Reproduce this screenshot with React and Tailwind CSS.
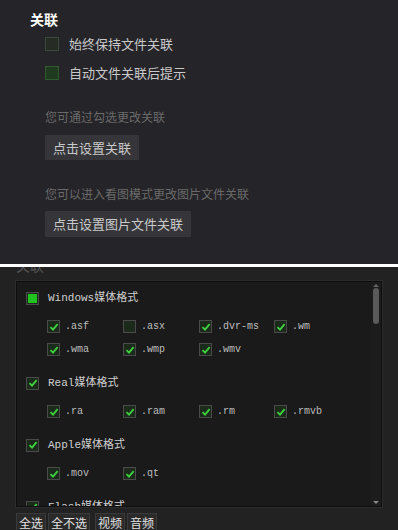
import { useState } from 'react';

const cn = '"Noto Sans CJK SC", "Noto Sans", sans-serif';
const mono = '"Liberation Mono", "Noto Sans CJK SC", monospace';

const grupos = [
  { nombre: 'Windows媒体格式', estado: 'parcial', items: [['.asf', true], ['.asx', false], ['.dvr-ms', true], ['.wm', true], ['.wma', true], ['.wmp', true], ['.wmv', true]] },
  { nombre: 'Real媒体格式', estado: 'todo', items: [['.ra', true], ['.ram', true], ['.rm', true], ['.rmvb', true]] },
  { nombre: 'Apple媒体格式', estado: 'todo', items: [['.mov', true], ['.qt', true]] },
  { nombre: 'Flash媒体格式', estado: 'todo', items: [] },
];

function Check({ on, parcial }) {
  return (
    <span className="flex h-[13px] w-[13px] shrink-0 items-center justify-center border border-[#4a4a4a] bg-[#1c2a1c]">
      {parcial ? (
        <span className="h-[9px] w-[9px] bg-[#1fc21f]" />
      ) : on ? (
        <svg width="10" height="10" viewBox="0 0 10 10">
          <path d="M1.5 5.2 L4 7.6 L8.6 2.2" fill="none" stroke="#3fd23f" strokeWidth="1.8" />
        </svg>
      ) : null}
    </span>
  );
}

export default function App() {
  const [opciones] = useState({ mantener: false, aviso: false });

  return (
    <div className="w-[398px] h-[530px] overflow-hidden bg-[#222222]" style={{ fontFamily: cn }}>
      <div className="h-[264px] bg-[#252429] pl-[30px] pt-[9px]">
        <h2 className="text-[14px] font-bold leading-[20px] text-white">关联</h2>
        <div className="ml-[15px] mt-[7px] flex flex-col gap-[14px]">
          <label className="flex items-center gap-[10px] text-[13px] leading-[15px] text-[#c9c9c9]">
            <span className="h-[14px] w-[14px] border border-[#3c4a3c] bg-[#262b26]" />
            始终保持文件关联
          </label>
          <label className="flex items-center gap-[10px] text-[13px] leading-[15px] text-[#c9c9c9]">
            <span className="h-[14px] w-[14px] border border-[#2f5a2f] bg-[#1f3a1f]" />
            自动文件关联后提示
          </label>
        </div>
        <p className="ml-[15px] mt-[29px] text-[12px] leading-[16px] text-[#6a6a6a]">您可通过勾选更改关联</p>
        <button className="ml-[15px] mt-[10px] h-[25px] bg-[#36363a] px-[8px] text-[13px] text-[#c9c9c9]">点击设置关联</button>
        <p className="ml-[15px] mt-[26px] text-[12px] leading-[16px] text-[#6a6a6a]">您可以进入看图模式更改图片文件关联</p>
        <button className="ml-[15px] mt-[9px] h-[26px] bg-[#36363a] px-[8px] text-[13px] text-[#c9c9c9]">点击设置图片文件关联</button>
      </div>
      <div className="h-[3px] bg-white" />
      <div className="relative h-[263px] overflow-hidden px-[16px]">
        <div className="-mt-[10px] text-[14px] leading-[16px] text-[#555]">关联</div>
        <div className="mt-[8px] h-[226px] w-[366px] overflow-hidden border border-[#0e0e0e] bg-[#1a1a1a] shadow-[0_0_0_1px_#2c2c2c]">
          <div className="flex h-full">
            <div className="flex-1 overflow-hidden pl-[9px] pt-[9px]">
              {grupos.map((g) => (
                <div key={g.nombre} className="mb-[20px]">
                  <div className="flex items-center gap-[9px] text-[10px] leading-[14px] text-[#cfcfcf]" style={{ fontFamily: mono }}>
                    <Check on={g.estado === 'todo'} parcial={g.estado === 'parcial'} />
                    <span className="text-[11px]">{g.nombre}</span>
                  </div>
                  <div className="ml-[21px] mt-[15px] grid grid-cols-[76px_76px_75px_76px] gap-y-[10px]">
                    {g.items.map(([ext, on]) => (
                      <div key={ext} className="flex h-[13px] items-center gap-[5px] text-[10px] text-[#bdbdbd]" style={{ fontFamily: mono }}>
                        <Check on={on} />
                        <span>{ext}</span>
                      </div>
                    ))}
                  </div>
                </div>
              ))}
            </div>
            <div className="flex w-[10px] flex-col items-center bg-[#1c1c1c] py-[2px]">
              <span className="h-0 w-0 border-x-[3px] border-b-[3px] border-x-transparent border-b-[#666]" />
              <span className="mt-[1px] h-[36px] w-[6px] rounded-[3px] bg-[#5a5a5a]" />
              <span className="flex-1" />
              <span className="h-0 w-0 border-x-[3px] border-t-[3px] border-x-transparent border-t-[#888]" />
            </div>
          </div>
        </div>
        <div className="mt-[6px] flex gap-[2px] text-[12px] leading-[17px] text-[#e0e0e0]">
          <button className="border border-[#3a3a3a] bg-[#2a2a2a] px-[2px]">全选</button>
          <button className="border border-[#3a3a3a] bg-[#2a2a2a] px-[2px]">全不选</button>
          <button className="ml-[3px] border border-[#3a3a3a] bg-[#2a2a2a] px-[2px]">视频</button>
          <button className="border border-[#3a3a3a] bg-[#2a2a2a] px-[2px]">音频</button>
        </div>
      </div>
    </div>
  );
}
